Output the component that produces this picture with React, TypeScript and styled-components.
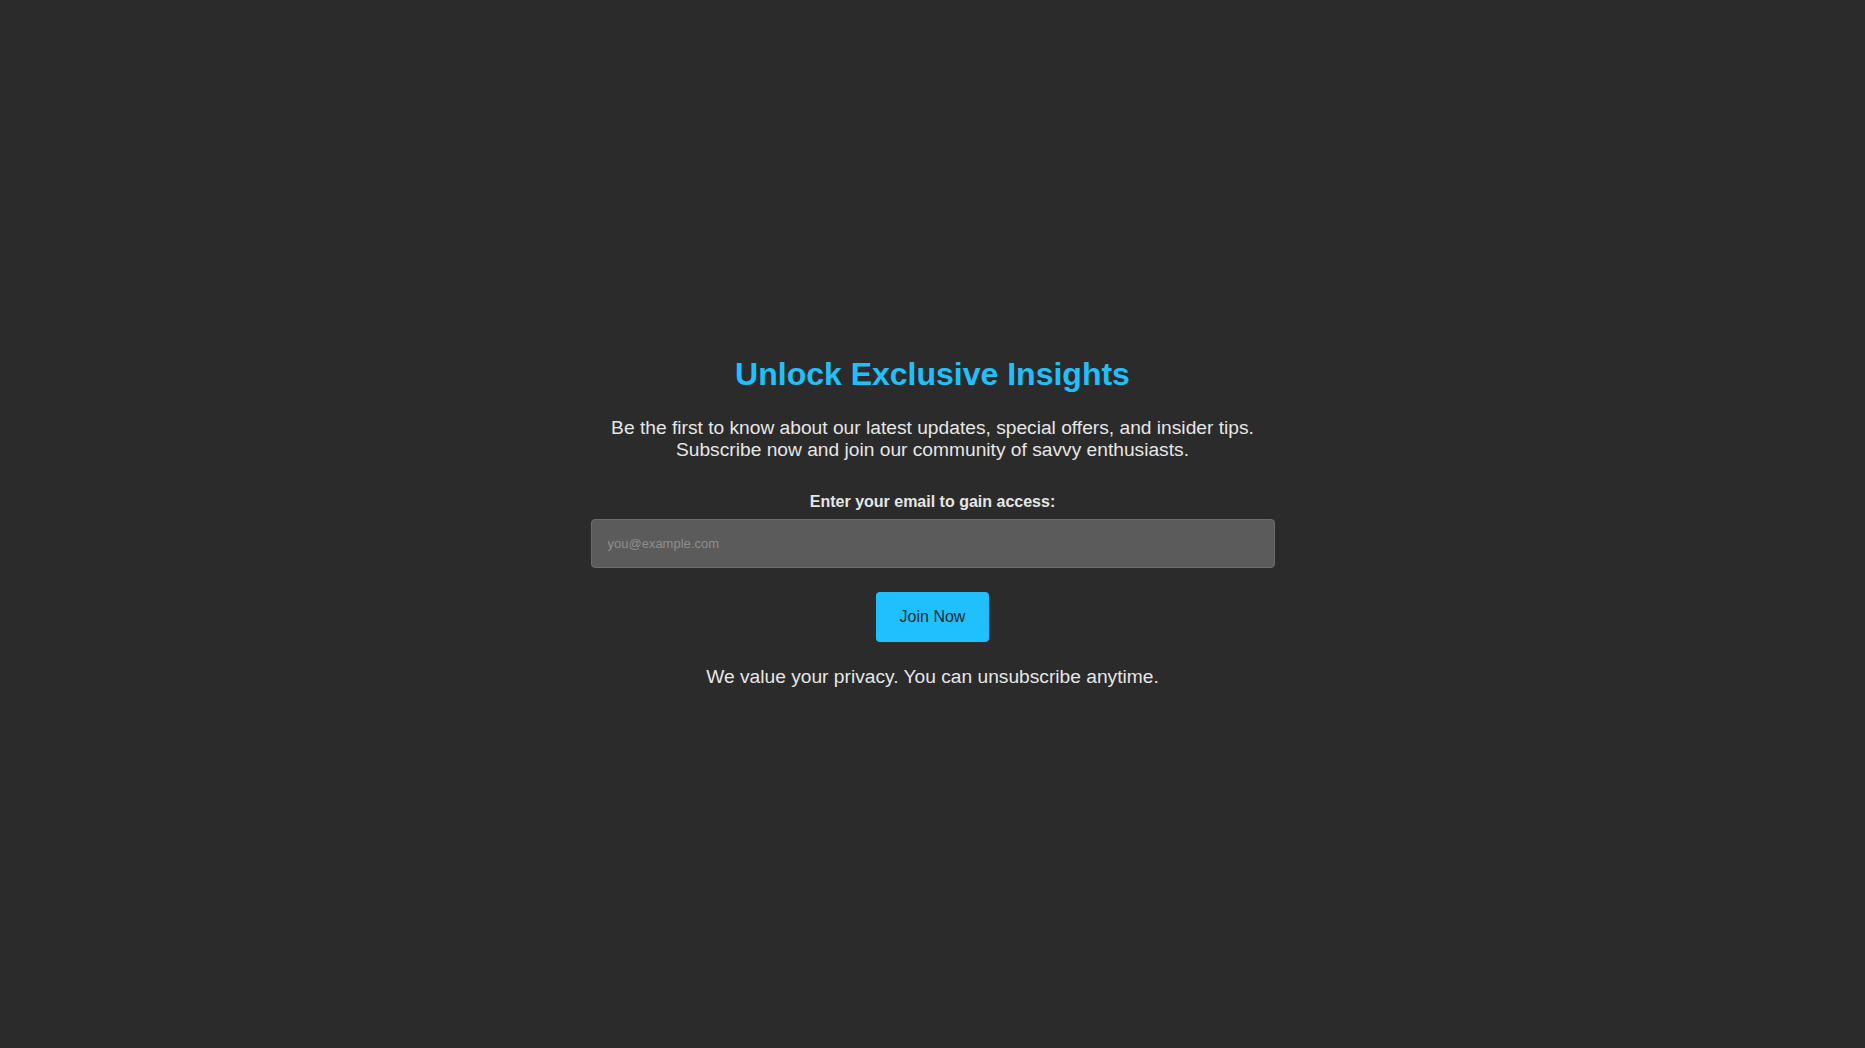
import React from "react";
import styled, { createGlobalStyle } from "styled-components";

const GlobalStyle = createGlobalStyle`
  html, body {
    margin: 0;
    padding: 0;
    background: #2b2b2b;
  }
  body {
    font-family: "Liberation Sans", Arial, Helvetica, sans-serif;
    color: #e4e4e4;
  }
  * { box-sizing: border-box; }
`;

const Page = styled.main`
  min-height: 100vh;
  display: flex;
  align-items: center;
  justify-content: center;
  padding-bottom: 5px;
`;

const Card = styled.section`
  width: 684px;
  display: flex;
  flex-direction: column;
  align-items: center;
  text-align: center;
`;

const Title = styled.h1`
  margin: 0 0 24px;
  font-size: 32px;
  font-weight: 700;
  line-height: normal;
  color: #20c0ff;
`;

const Lead = styled.p`
  margin: 0 0 32px;
  font-size: 19.2px;
  line-height: normal;
  color: #e6e6e6;
`;

const Form = styled.form`
  width: 100%;
  display: flex;
  flex-direction: column;
  align-items: center;
`;

const Label = styled.label`
  margin-bottom: 8px;
  font-size: 16px;
  font-weight: 700;
  line-height: normal;
  color: #e6e6e6;
`;

const EmailInput = styled.input`
  width: 100%;
  height: 49px;
  padding: 0 16px;
  margin: 0 0 24px;
  background: #5b5b5b;
  border: 1px solid #6b6b6b;
  border-radius: 4px;
  color: #eeeeee;
  font-family: "Liberation Sans", Arial, Helvetica, sans-serif;
  font-size: 13px;
  outline: none;
  &::placeholder {
    color: #8e8e8e;
  }
`;

const JoinButton = styled.button`
  height: 50px;
  padding: 0 24px;
  background: #20c0ff;
  color: #1f2a30;
  border: none;
  border-radius: 4px;
  font-family: "Liberation Sans", Arial, Helvetica, sans-serif;
  font-size: 16px;
  cursor: pointer;
`;

const Note = styled.p`
  margin: 24px 0 0;
  font-size: 19.2px;
  line-height: normal;
  color: #e6e6e6;
`;

export default function App() {
  return (
    <>
      <GlobalStyle />
      <Page>
        <Card>
          <Title>Unlock Exclusive Insights</Title>
          <Lead>
            Be the first to know about our latest updates, special offers, and insider tips.
            <br />
            Subscribe now and join our community of savvy enthusiasts.
          </Lead>
          <Form onSubmit={(e) => e.preventDefault()}>
            <Label htmlFor="email">Enter your email to gain access:</Label>
            <EmailInput id="email" type="email" placeholder="you@example.com" />
            <JoinButton type="submit">Join Now</JoinButton>
          </Form>
          <Note>We value your privacy. You can unsubscribe anytime.</Note>
        </Card>
      </Page>
    </>
  );
}
